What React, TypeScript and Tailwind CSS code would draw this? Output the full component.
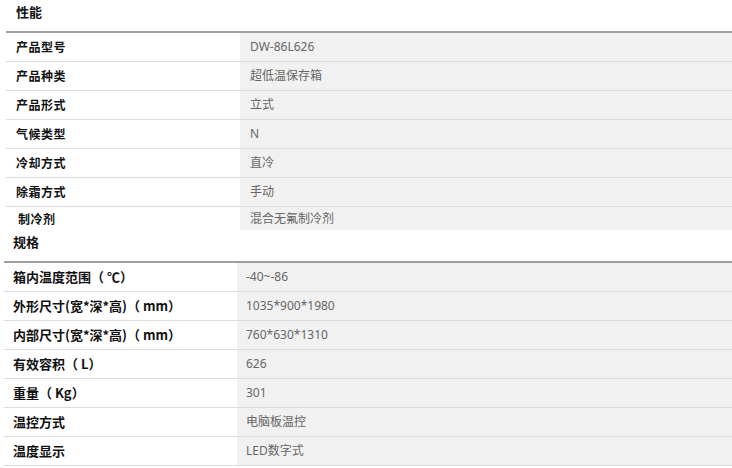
const perf = [
  { label: "产品型号", value: "DW-86L626" },
  { label: "产品种类", value: "超低温保存箱" },
  { label: "产品形式", value: "立式" },
  { label: "气候类型", value: "N" },
  { label: "冷却方式", value: "直冷" },
  { label: "除霜方式", value: "手动" },
];

const spec = [
  { label: "箱内温度范围（ ℃）", value: "-40~-86" },
  { label: "外形尺寸(宽*深*高)（ mm）", value: "1035*900*1980" },
  { label: "内部尺寸(宽*深*高)（ mm）", value: "760*630*1310" },
  { label: "有效容积（ L）", value: "626" },
  { label: "重量（ Kg）", value: "301" },
  { label: "温控方式", value: "电脑板温控" },
  { label: "温度显示", value: "LED数字式" },
];

const labelFont = "font-['Noto_Sans_CJK_SC',sans-serif] font-bold text-[#111]";
const valueFont = "font-['Noto_Sans','Noto_Sans_CJK_SC',sans-serif] text-[12px] text-[#666]";

const App = () => {
  return (
    <div className="w-[732px] h-[468px] bg-white overflow-hidden">
      {/* 性能 */}
      <div className="pl-[6px]">
        <div className={`h-[31px] pl-[10px] pt-[2px] flex items-start ${labelFont} text-[13px]`}>性能</div>
        <div className="border-t-2 border-[#a0a0a0]">
          {perf.map((row) => (
            <div key={row.label} className="flex h-[29px] border-b border-[#dcdcdc]">
              <div className={`w-[234px] pl-[10px] flex items-center text-[12px] tracking-[0.5px] ${labelFont}`}>{row.label}</div>
              <div className={`flex-1 bg-[#f1f1f1] pl-[10px] flex items-center ${valueFont}`}>{row.value}</div>
            </div>
          ))}
          <div className="flex h-[23px]">
            <div className={`w-[234px] pl-[12px] flex items-center text-[12px] tracking-[0.5px] ${labelFont}`}>制冷剂</div>
            <div className={`flex-1 bg-[#f1f1f1] pl-[10px] flex items-center ${valueFont}`}>混合无氟制冷剂</div>
          </div>
        </div>
      </div>

      {/* 规格 */}
      <div className="pl-[4px]">
        <div className={`h-[31px] pl-[9px] pt-[2px] flex items-start ${labelFont} text-[13px]`}>规格</div>
        <div className="border-t-2 border-[#a0a0a0]">
          {spec.map((row) => (
            <div key={row.label} className="flex h-[29px] border-b border-[#dcdcdc]">
              <div className={`w-[233px] pl-[9px] flex items-center whitespace-pre text-[13px] ${labelFont}`}>{row.label}</div>
              <div className={`flex-1 bg-[#f1f1f1] pl-[9px] flex items-center ${valueFont}`}>{row.value}</div>
            </div>
          ))}
        </div>
      </div>
    </div>
  );
};

export default App;
